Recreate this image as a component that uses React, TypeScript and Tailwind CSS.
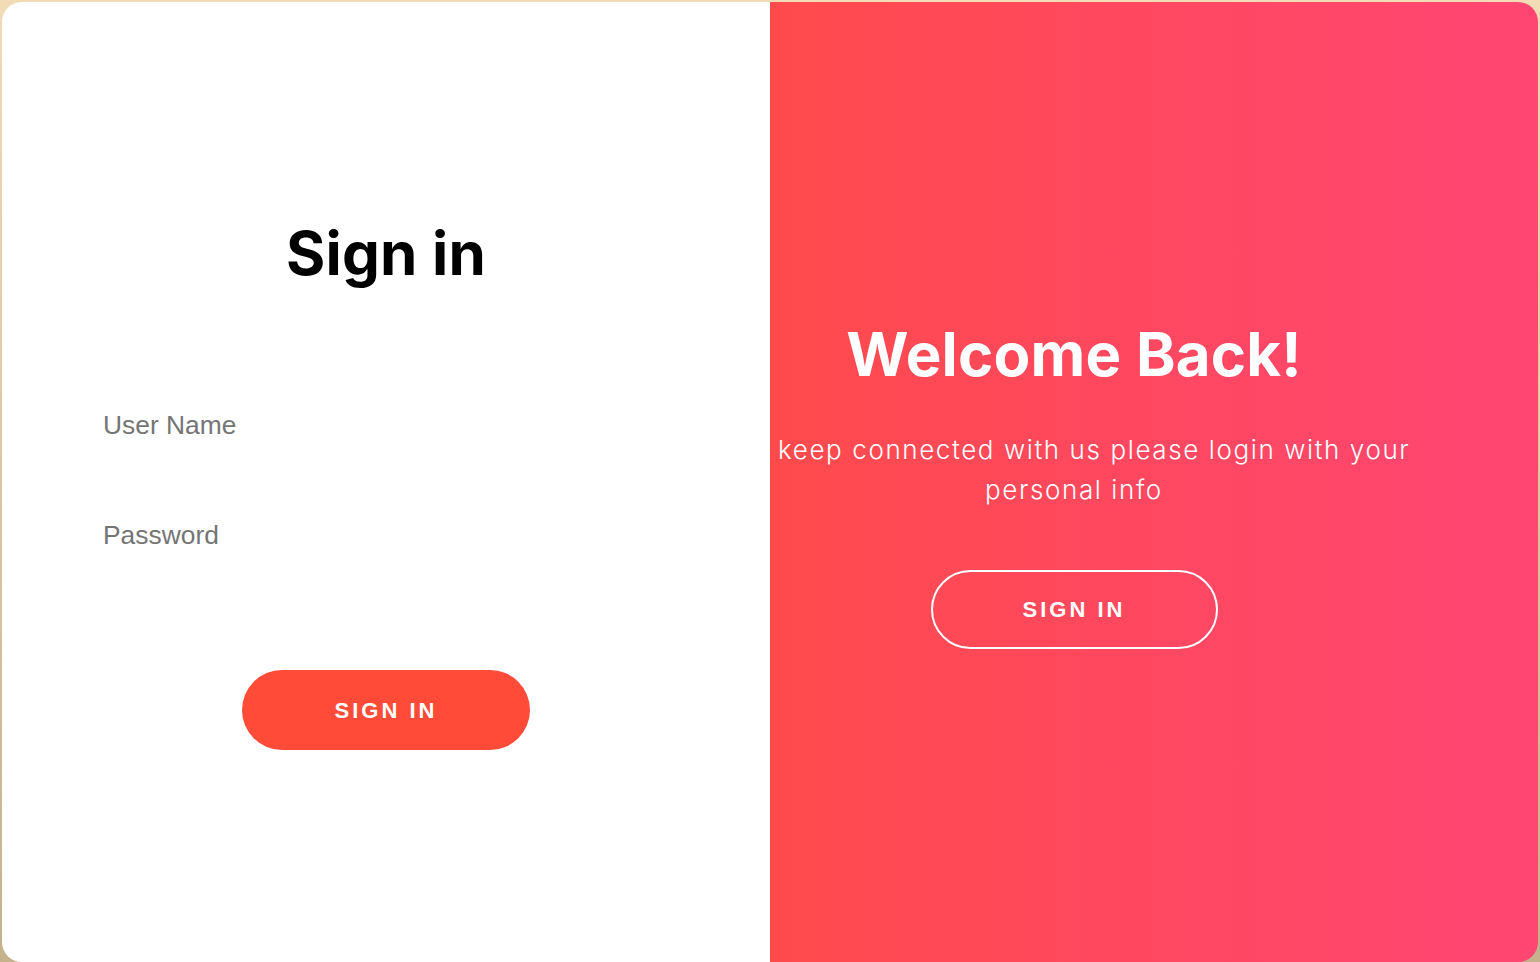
export default function App() {
  return (
    <div className="h-[962px] w-full overflow-hidden bg-gradient-to-b from-[#f2dcb6] to-[#c6b18d] px-[2px] pt-[2px]">
      <div className="flex h-[960px] overflow-hidden rounded-[20px]">
        {/* left: form */}
        <section className="flex w-[768px] flex-col bg-white pt-[215px] font-['Inter',sans-serif]">
          <h1 className="text-center text-[60px] font-bold leading-[72px] tracking-[0.2px] text-black">
            Sign in
          </h1>
          <input
            type="text"
            placeholder="User Name"
            className="mx-[101px] mt-[120px] h-[32px] bg-transparent font-['Liberation_Sans',Arial,sans-serif] text-[26.4px] leading-[32px] text-[#333] outline-none placeholder:text-[#757575]"
          />
          <input
            type="password"
            placeholder="Password"
            className="mx-[101px] mt-[78px] h-[32px] bg-transparent font-['Liberation_Sans',Arial,sans-serif] text-[26.4px] leading-[32px] text-[#333] outline-none placeholder:text-[#757575]"
          />
          <button
            type="button"
            className="mt-[119px] h-[80px] w-[288px] self-center rounded-full bg-[#ff4b37] font-['Liberation_Sans',Arial,sans-serif] text-[22px] font-bold tracking-[3px] text-white"
          >
            SIGN IN
          </button>
        </section>

        {/* right: welcome */}
        <section className="flex flex-1 bg-gradient-to-r from-[#ff4a4c] to-[#ff4572] font-['Inter',sans-serif] text-white">
          <div className="flex w-[608px] flex-col items-center pt-[316px]">
            <h2 className="text-center text-[60px] font-bold leading-[72px] tracking-[0.2px]">
              Welcome Back!
            </h2>
            <p className="mt-[40px] w-full text-[26px] font-light leading-[40px] tracking-[1.6px]">
              <span className="ml-[8px] block whitespace-nowrap">
                keep connected with us please login with your
              </span>
              <span className="block text-center">personal info</span>
            </p>
            <button
              type="button"
              className="mt-[60px] h-[79px] w-[287px] rounded-full border-2 border-white font-['Liberation_Sans',Arial,sans-serif] text-[22px] font-bold tracking-[3px] text-white"
            >
              SIGN IN
            </button>
          </div>
        </section>
      </div>
    </div>
  );
}
